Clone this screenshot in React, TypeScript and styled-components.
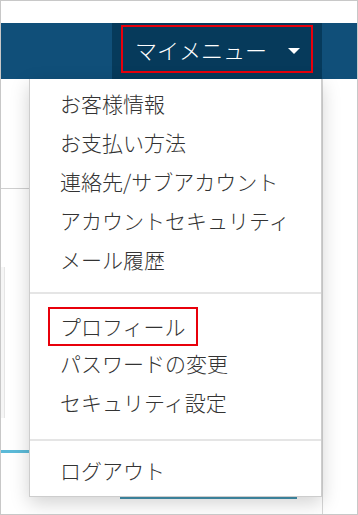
import React from 'react';
import styled, { createGlobalStyle } from 'styled-components';

const menuTop = ['お客様情報', 'お支払い方法', '連絡先/サブアカウント', 'アカウントセキュリティ', 'メール履歴'];
const menuMiddle = ['プロフィール', 'パスワードの変更', 'セキュリティ設定'];

const App: React.FC = () => {
  return (
    <>
      <GlobalStyle />
      <Frame>
        <TopGap />
        <Header>
          <Toggle>
            <ToggleBox>
              <span>マイメニュー</span>
              <Caret />
            </ToggleBox>
          </Toggle>
        </Header>

        <Main>
          <Content>
            <TopSection />
            <SideCard />
            <TabLine />
            <ActionButton />
          </Content>

          <Dropdown>
            {menuTop.map((label) => (
              <Item key={label}>{label}</Item>
            ))}
            <Divider $top={13} $bottom={11} />
            {menuMiddle.map((label) =>
              label === 'プロフィール' ? (
                <Item key={label}>
                  <Boxed>{label}</Boxed>
                </Item>
              ) : (
                <Item key={label}>{label}</Item>
              )
            )}
            <Divider $top={17} $bottom={10} />
            <Item>ログアウト</Item>
          </Dropdown>
        </Main>
      </Frame>
    </>
  );
};

const GlobalStyle = createGlobalStyle`
  body {
    margin: 0;
    background: #fff;
    font-family: 'Noto Sans CJK JP', 'Noto Sans', sans-serif;
  }
`;

const Frame = styled.div`
  width: 358px;
  height: 515px;
  box-sizing: border-box;
  border: 1px solid #c8c8c8;
  background: #fff;
  overflow: hidden;
`;

const TopGap = styled.div`
  height: 22px;
`;

const Header = styled.div`
  height: 56px;
  background: #104f79;
  display: flex;
  justify-content: flex-end;
  padding-right: 35px;
`;

const Toggle = styled.div`
  width: 210px;
  box-sizing: border-box;
  background: #063a5b;
  padding: 2px 9px 6px;
  display: flex;
`;

const ToggleBox = styled.div`
  flex: 1;
  border: 2px solid #e8000b;
  display: flex;
  align-items: center;
  justify-content: space-between;
  padding: 0 11px 0 12px;
  color: #fff;
  font-size: 22px;
  font-weight: 300;
`;

const Caret = styled.span`
  width: 0;
  height: 0;
  border-left: 6px solid transparent;
  border-right: 6px solid transparent;
  border-top: 6px solid #fff;
  margin-top: 4px;
`;

const Main = styled.div`
  position: relative;
  display: flex;
  height: 435px;
`;

const Content = styled.div`
  width: 321px;
  border-right: 1px solid #d6d6d6;
  display: flex;
  flex-direction: column;
`;

const TopSection = styled.div`
  height: 110px;
  box-sizing: border-box;
  border-bottom: 1px solid #cfcfcf;
`;

const SideCard = styled.div`
  margin-top: 78px;
  width: 3px;
  height: 151px;
  background: #f6f6f6;
  border-right: 1px solid #e6e6e6;
`;

const TabLine = styled.div`
  margin-top: 32px;
  height: 3px;
  background: #5bbad8;
`;

const ActionButton = styled.div`
  margin: 10px 0 0 119px;
  width: 177px;
  height: 36px;
  box-sizing: border-box;
  background: #5fb6d3;
  border-bottom: 2px solid #4493b0;
`;

const Dropdown = styled.div`
  position: absolute;
  top: 0;
  left: 28px;
  width: 293px;
  box-sizing: border-box;
  background: #fff;
  border: 1px solid #cdcdcd;
  border-top: none;
  box-shadow: 0 6px 18px rgba(0, 0, 0, 0.18);
  padding: 5px 0 6px;
`;

const Item = styled.div`
  height: 39px;
  line-height: 39px;
  padding-left: 30px;
  font-size: 21px;
  font-weight: 300;
  color: #333;
  white-space: nowrap;
`;

const Boxed = styled.span`
  display: inline-block;
  box-sizing: border-box;
  height: 39px;
  line-height: 35px;
  border: 2px solid #e8000b;
  padding: 0 10px;
  margin-left: -12px;
  transform: translateY(2px);
`;

const Divider = styled.div<{ $top: number; $bottom: number }>`
  height: 2px;
  background: #e5e5e5;
  margin: ${(p) => p.$top}px 0 ${(p) => p.$bottom}px;
`;

export default App;
